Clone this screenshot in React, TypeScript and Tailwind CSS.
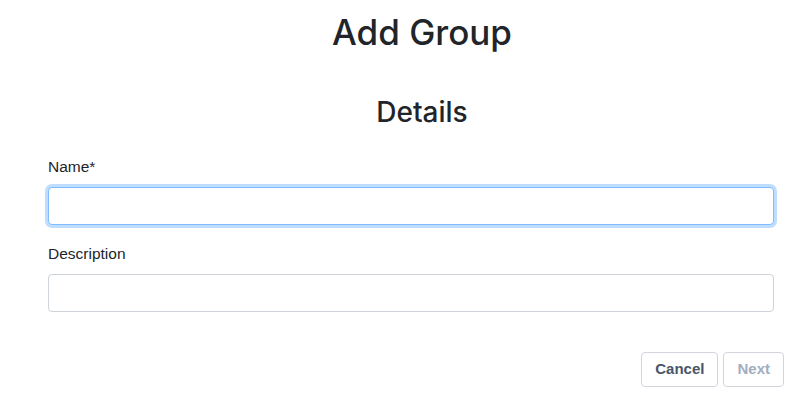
export default function App() {
  return (
    <div className="min-h-[399px] bg-white text-[#212529]" style={{ fontFamily: '"Liberation Sans", Arial, sans-serif' }}>
      <div className="px-[48px] pr-[28px]">
        <h1 className="pt-[10px] pl-[12px] text-center text-[35px] font-medium leading-[44px] font-['Inter',sans-serif]">Add Group</h1>
        <h2 className="mt-[41px] pl-[12px] text-center text-[28px] font-medium leading-[34px] font-['Inter',sans-serif]">Details</h2>

        <form className="mt-[27px] pr-[10px]">
          <label className="block text-[15.5px] leading-[22px]">Name*</label>
          <input
            type="text"
            className="mt-[9px] block h-[38px] w-full rounded-[4px] border border-[#80bdff] bg-white px-3 outline-none shadow-[0_0_0_3px_rgba(0,123,255,0.25)]"
          />
          <label className="mt-[18px] block text-[15.5px] leading-[22px]">Description</label>
          <input
            type="text"
            className="mt-[9px] block h-[38px] w-full rounded-[4px] border border-[#ced4da] bg-white px-3 outline-none"
          />
        </form>

        <div className="mt-[40px] flex justify-end gap-[5px]">
          <button className="h-[35px] rounded-[4px] border border-[#d2d6dc] bg-white px-[13px] text-[15px] font-semibold text-[#4a5568]">
            Cancel
          </button>
          <button disabled className="h-[35px] rounded-[4px] border border-[#d2d6dc] bg-white px-[13px] text-[15px] font-semibold text-[#a0aec0]">
            Next
          </button>
        </div>
      </div>
    </div>
  );
}
